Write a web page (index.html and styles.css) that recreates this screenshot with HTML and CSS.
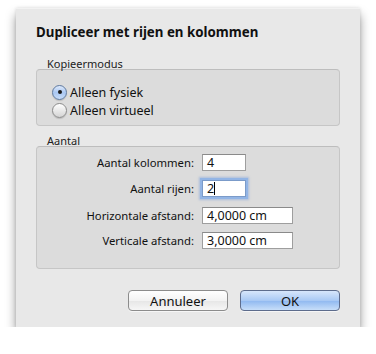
FILE: index.html
```html
<!DOCTYPE html>
<html>
  <head>
    <meta charset="UTF-8">
    <title>Dupliceer met rijen en kolommen</title>
    <link rel="stylesheet" href="styles.css">
  </head>
  <body>
    <div class="dialog">
      <h1 class="title">Dupliceer met rijen en kolommen</h1>

      <div class="group-label">Kopieermodus</div>
      <div class="group group-mode">
        <label class="radio"><span class="radio-dot checked"></span>Alleen fysiek</label>
        <label class="radio"><span class="radio-dot"></span>Alleen virtueel</label>
      </div>

      <div class="group-label">Aantal</div>
      <div class="group group-count">
        <div class="row">
          <span class="row-label">Aantal kolommen:</span>
          <span class="field small">4</span>
        </div>
        <div class="row">
          <span class="row-label">Aantal rijen:</span>
          <span class="field small focus">2<span class="caret"></span></span>
        </div>
        <div class="row">
          <span class="row-label">Horizontale afstand:</span>
          <span class="field wide">4,0000 cm</span>
        </div>
        <div class="row">
          <span class="row-label">Verticale afstand:</span>
          <span class="field wide">3,0000 cm</span>
        </div>
      </div>

      <div class="buttons">
        <button class="btn">Annuleer</button>
        <button class="btn btn-default">OK</button>
      </div>
    </div>
  </body>
</html>
```

FILE: styles.css
```css
*, ::after, ::before {
    box-sizing: border-box;
}

body {
    margin: 0;
    background: #fff;
    font-family: "Noto Sans", "DejaVu Sans", sans-serif;
    font-size: 12.5px;
    color: #111;
}

.dialog {
    margin: 8px 16px 0;
    width: 344px;
    height: 319px;
    padding: 15px 20px 0;
    background: #e8e8e8;
    border-top: 1px solid #f2f2f2;
    box-shadow: 0 7px 10px rgba(0, 0, 0, .4), 0 0 3px rgba(0, 0, 0, .12);
}

.title {
    margin: 0 0 17px;
    font-size: 13.3px;
    line-height: 16px;
    font-weight: bold;
}

.group-label {
    padding-left: 11px;
    font-size: 11px;
    line-height: 14px;
    color: #222;
    margin-bottom: -2px;
}

.group {
    background: #dcdcdc;
    border: 1px solid #c6c6c6;
    border-top-color: #bdbdbd;
    border-radius: 4px;
}

.group-mode {
    height: 57px;
    padding: 13px 0 0 15px;
    margin-bottom: 8px;
}

.radio {
    display: flex;
    align-items: center;
    height: 18px;
    gap: 3px;
}

.radio-dot {
    width: 15px;
    height: 15px;
    border-radius: 50%;
    border: 1px solid #8b8b8b;
    background: linear-gradient(#ffffff, #e9e9e9 50%, #d4d4d4);
    box-shadow: 0 1px 1px rgba(0, 0, 0, .15);
    display: flex;
    align-items: center;
    justify-content: center;
}

.radio-dot.checked {
    border-color: #5f7aa0;
    background: linear-gradient(#dfeafb, #a9c7f2 50%, #c7dcf8);
}

.radio-dot.checked::after {
    content: "";
    width: 4px;
    height: 4px;
    border-radius: 50%;
    background: #1a1a1a;
}

.group-count {
    height: 123px;
    padding-top: 7px;
}

.row {
    display: flex;
    align-items: center;
    height: 17px;
    margin-bottom: 9px;
}
.row:nth-child(2) { margin-bottom: 10px; }
.row:nth-child(3) { margin-bottom: 8px; }

.row-label {
    width: 165px;
    text-align: right;
    padding-right: 8px;
    font-size: 11.3px;
}

.field {
    height: 17px;
    background: #fff;
    border: 1px solid #9e9e9e;
    border-top-color: #8a8a8a;
    padding: 0 0 0 4px;
    line-height: 15px;
    display: flex;
    align-items: center;
}

.field.small { width: 44px; }
.field.wide { width: 91px; }

.field.focus {
    border-color: #7b9bc9;
    box-shadow: 0 0 0 2px #93b5e5, 0 0 2px 3px rgba(120, 160, 220, .5);
}

.caret {
    display: inline-block;
    width: 1px;
    height: 13px;
    background: #000;
}

.buttons {
    display: flex;
    justify-content: flex-end;
    gap: 12px;
    margin-top: 21px;
}

.btn {
    width: 100px;
    height: 21px;
    margin: 0;
    padding: 0;
    font-family: inherit;
    font-size: 13px;
    color: #111;
    border: 1px solid #8c8c8c;
    border-radius: 4px;
    background: linear-gradient(#ffffff, #f3f3f3 50%, #e6e6e6 51%, #f6f6f6);
    box-shadow: 0 1px 0 rgba(255, 255, 255, .6);
}

.btn-default {
    border-color: #5d6c8c;
    background: linear-gradient(#d7e6fb, #a9c9f4 50%, #8fb8f0 51%, #c7def9);
}
```
